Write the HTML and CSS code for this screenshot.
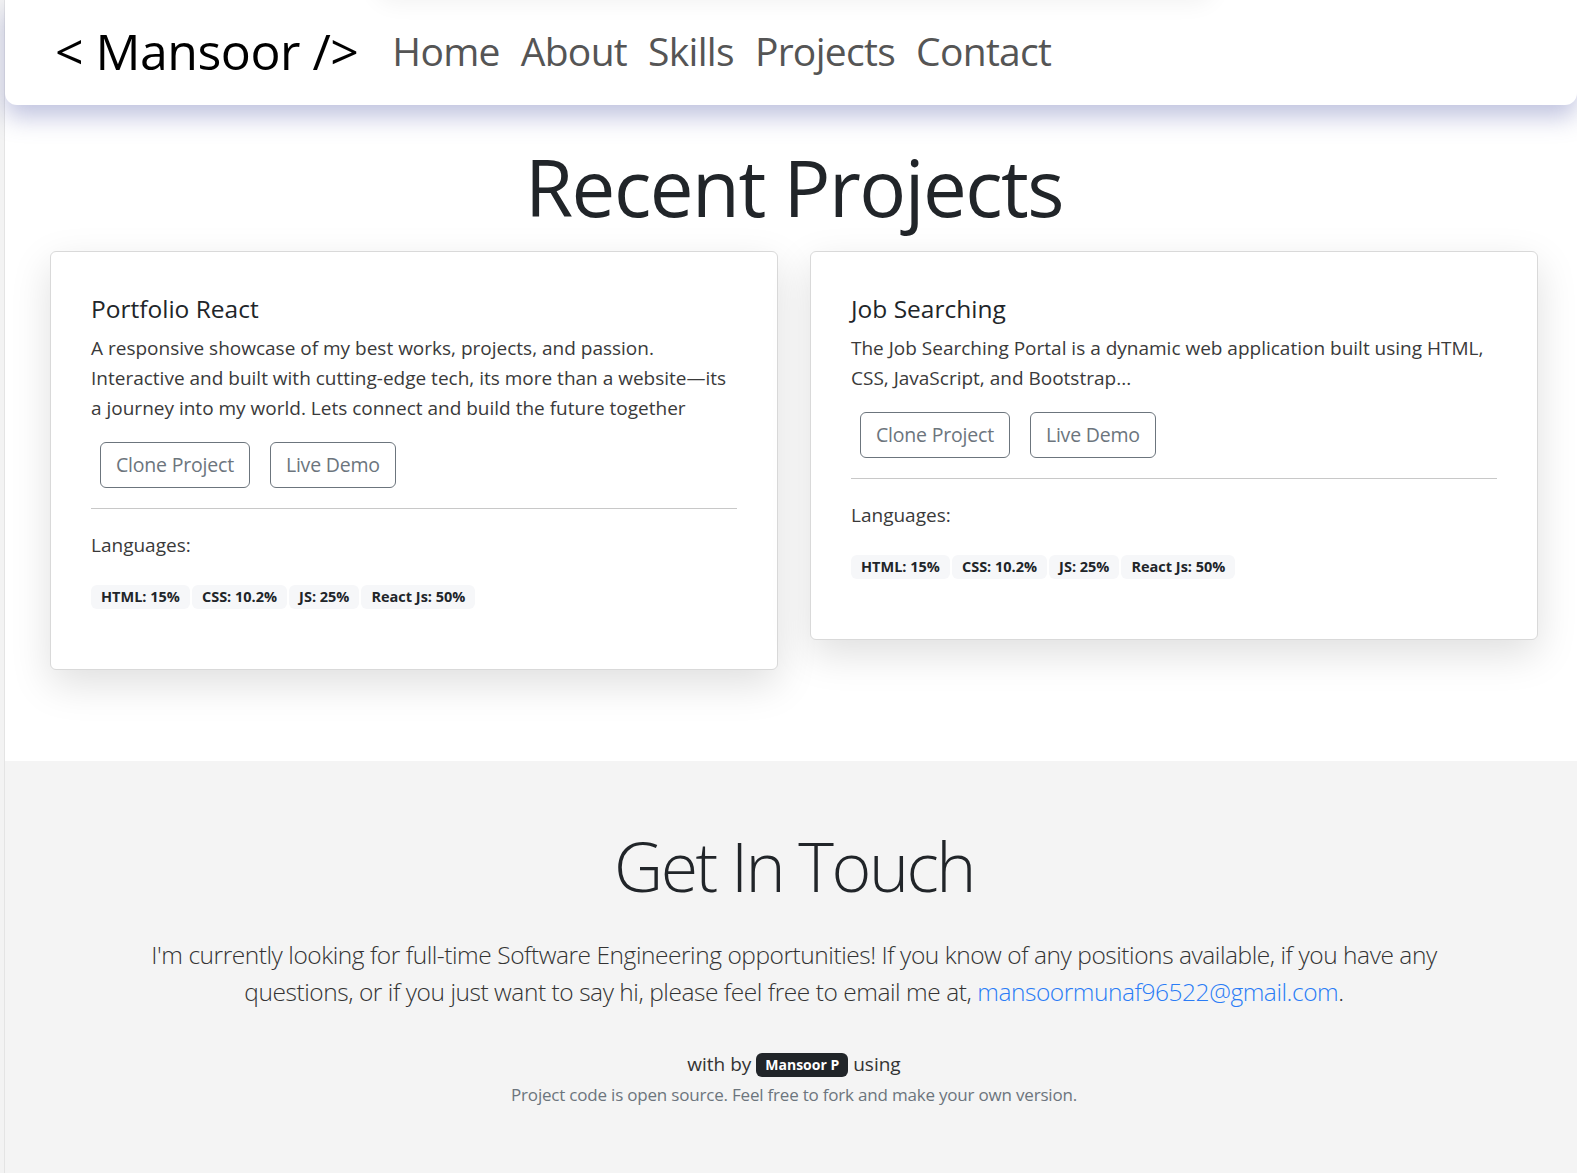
FILE: index.html
```html
<!DOCTYPE html>
<html lang="en">
<head>
<meta charset="utf-8">
<title>Mansoor - Projects</title>
<link rel="stylesheet" href="styles.css">
</head>
<body>
<div class="page">
  <header class="navbar">
    <a class="brand" href="#">&lt; Mansoor /&gt;</a>
    <nav class="nav-links">
      <a href="#">Home</a>
      <a href="#">About</a>
      <a href="#">Skills</a>
      <a href="#">Projects</a>
      <a href="#">Contact</a>
    </nav>
  </header>

  <section class="projects">
    <h1 class="section-title">Recent Projects</h1>
    <div class="cards">
      <article class="card">
        <h5 class="card-title">Portfolio React</h5>
        <p class="card-text">A responsive showcase of my best works, projects, and passion. Interactive and built with cutting-edge tech, its more than a website—its a journey into my world. Lets connect and build the future together</p>
        <div class="card-actions">
          <a class="btn" href="#">Clone Project</a>
          <a class="btn" href="#">Live Demo</a>
        </div>
        <hr class="divider">
        <p class="lang-label">Languages:</p>
        <div class="badges">
          <span class="badge">HTML: 15%</span>
          <span class="badge">CSS: 10.2%</span>
          <span class="badge">JS: 25%</span>
          <span class="badge">React Js: 50%</span>
        </div>
      </article>
      <article class="card">
        <h5 class="card-title">Job Searching</h5>
        <p class="card-text">The Job Searching Portal is a dynamic web application built using HTML, CSS, JavaScript, and Bootstrap...</p>
        <div class="card-actions">
          <a class="btn" href="#">Clone Project</a>
          <a class="btn" href="#">Live Demo</a>
        </div>
        <hr class="divider">
        <p class="lang-label">Languages:</p>
        <div class="badges">
          <span class="badge">HTML: 15%</span>
          <span class="badge">CSS: 10.2%</span>
          <span class="badge">JS: 25%</span>
          <span class="badge">React Js: 50%</span>
        </div>
      </article>
    </div>
  </section>

  <footer class="contact">
    <h2 class="contact-title">Get In Touch</h2>
    <p class="contact-text">I'm currently looking for full-time Software Engineering opportunities! If you know of any positions available, if you have any questions, or if you just want to say hi, please feel free to email me at, <a class="mail" href="#">mansoormunaf96522@gmail.com</a>.</p>
    <p class="credit">with by <span class="credit-badge">Mansoor P</span> using</p>
    <p class="credit-note">Project code is open source. Feel free to fork and make your own version.</p>
  </footer>
</div>
</body>
</html>
```

FILE: styles.css
```css
* { box-sizing: border-box; }

html, body {
  margin: 0;
  padding: 0;
}

body {
  background: #f3f3f3;
  font-family: "Open Sans", "Noto Sans", sans-serif;
  color: #212529;
  padding-left: 4px;
  overflow: hidden;
}

.page {
  background: #ffffff;
  border-left: 1px solid #e4e4e4;
}

/* ---------- navbar ---------- */
.navbar {
  height: 105px;
  display: flex;
  align-items: center;
  padding-left: 50px;
  padding-bottom: 4px;
  background: #fff;
  border-radius: 0 0 12px 12px;
  box-shadow: 0 12px 24px rgba(90, 98, 170, 0.38);
  position: relative;
  z-index: 2;
}

/* faint shadow of an off-screen element above the navbar */
.navbar::before {
  content: "";
  position: absolute;
  top: -40px;
  left: 370px;
  width: 840px;
  height: 40px;
  border-radius: 20px;
  box-shadow: 0 4px 22px rgba(0, 0, 0, 0.05);
  pointer-events: none;
}

.brand {
  font-size: 50px;
  color: #000;
  text-decoration: none;
  letter-spacing: -0.5px;
  margin-right: 34px;
}

.nav-links {
  display: flex;
  gap: 21px;
}

.nav-links a {
  font-size: 39px;
  color: #555;
  text-decoration: none;
  letter-spacing: -0.7px;
}

/* ---------- projects ---------- */
.projects {
  padding: 36px 39px 91px 45px;
  background: #fff;
}

.section-title {
  margin: 0 0 16px;
  text-align: center;
  font-size: 78px;
  font-weight: 400;
  line-height: 1.2;
  letter-spacing: -1.5px;
  color: #212529;
}

.cards {
  display: flex;
  gap: 32px;
  align-items: flex-start;
}

.card {
  flex: 1;
  border: 1px solid #d9d9d9;
  border-radius: 6px;
  padding: 41px 40px 40px;
  background: #fff;
  box-shadow: 0 14px 40px rgba(0, 0, 0, 0.13);
}

.card-title {
  margin: 0 0 8px;
  font-size: 24.5px;
  font-weight: 400;
  line-height: 32px;
  color: #212529;
}

.card-text,
.lang-label {
  margin: 0;
  font-size: 19px;
  line-height: 30px;
  font-weight: 400;
  color: #3a3a3a;
}

.card-actions {
  display: flex;
  gap: 20px;
  padding-left: 9px;
  margin-top: 19px;
}

.btn {
  display: inline-block;
  padding: 7px 15px;
  font-size: 19.5px;
  line-height: 30px;
  color: #6c757d;
  border: 1px solid #6c757d;
  border-radius: 6px;
  text-decoration: none;
  letter-spacing: -0.2px;
}

.divider {
  margin: 20px 0 21px;
  border: 0;
  border-top: 1px solid #c8c8c8;
}

.badges {
  display: flex;
  gap: 2px;
  margin: 25px 0 20px;
}

.badge {
  display: inline-block;
  background: #f6f7f9;
  border-radius: 6px;
  padding: 0 10px;
  height: 24px;
  line-height: 24px;
  font-size: 14.5px;
  font-weight: 700;
  color: #212529;
}

/* ---------- contact ---------- */
.contact {
  background: #f4f4f4;
  padding: 64px 39px 60px 45px;
  text-align: center;
  min-height: 440px;
}

.contact-title {
  margin: 0 0 30px;
  font-size: 68px;
  font-weight: 300;
  line-height: 1.2;
  letter-spacing: -2.5px;
  color: #212529;
}

.contact-text {
  max-width: 1320px;
  margin: 0 auto 39px;
  font-size: 24.5px;
  font-weight: 300;
  line-height: 37px;
  color: #333;
  letter-spacing: -0.45px;
}

.mail {
  color: #2a7cf6;
  text-decoration: none;
}

.credit {
  margin: 0;
  font-size: 19px;
  line-height: 30px;
  color: #333;
}

.credit-badge {
  display: inline-block;
  background: #212529;
  color: #fff;
  font-size: 14px;
  font-weight: 700;
  line-height: 24px;
  padding: 0 9px;
  border-radius: 6px;
  vertical-align: 1px;
}

.credit-note {
  margin: 1px 0 0;
  font-size: 17px;
  line-height: 30px;
  color: #6c757d;
  letter-spacing: -0.2px;
}
```
